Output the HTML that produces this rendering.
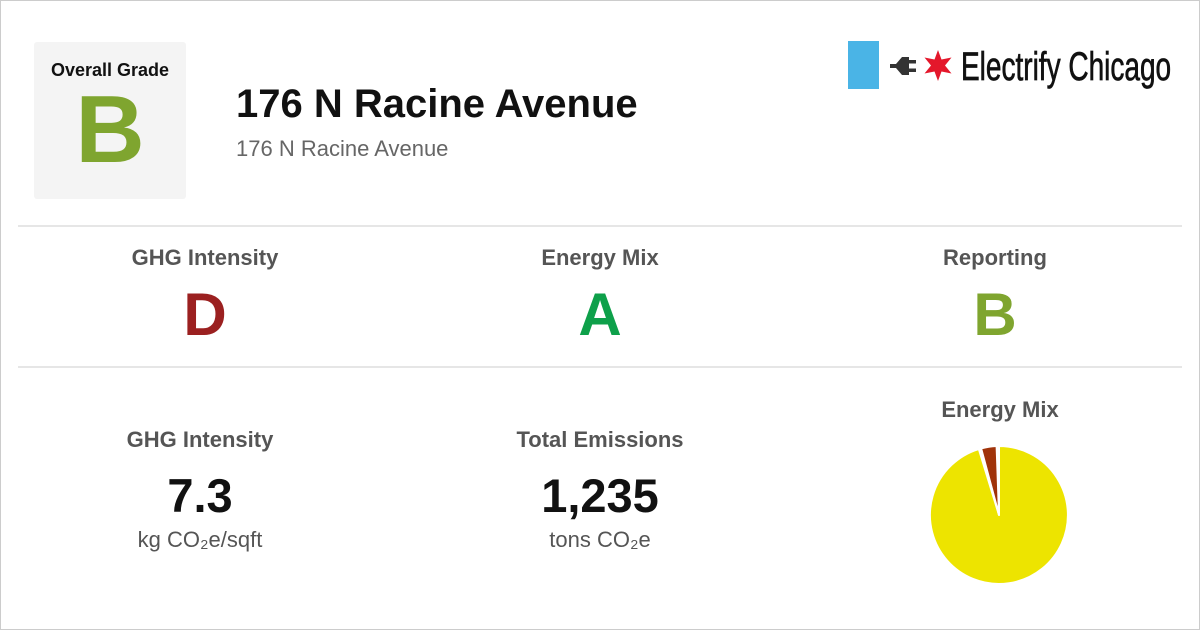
<!DOCTYPE html>
<html><head><style>
body{margin:0;width:1200px;height:630px;background:#fff;font-family:"Liberation Sans",sans-serif;overflow:hidden}
.frame{position:absolute;left:0;top:0;width:1198px;height:628px;border:1px solid #ccc}
.abs{position:absolute}
.c{text-align:center;position:absolute}
.lbl{font-weight:bold;color:#555;font-size:22px}
.hr{position:absolute;left:18px;width:1164px;height:2px;background:#e6e6e6}
</style></head><body>
<div class="frame"></div>
<div class="abs" style="left:34px;top:42px;width:152px;height:157px;background:#f4f4f4;border-radius:3px"></div>
<div class="c" style="left:34px;width:152px;top:60px;font-weight:bold;font-size:18px;color:#111">Overall Grade</div>
<div class="c" style="left:34px;width:152px;top:82px;font-weight:bold;font-size:96px;color:#7fa52f;line-height:1">B</div>
<div class="abs" style="left:236px;top:82px;font-weight:bold;font-size:40px;color:#111;white-space:nowrap">176 N Racine Avenue</div>
<div class="abs" style="left:236px;top:136px;font-size:22px;color:#666">176 N Racine Avenue</div>
<div class="abs" style="left:848px;top:41px;width:31px;height:48px;background:#4ab4e6"></div>
<svg class="abs" style="left:886px;top:48px" width="72" height="36" viewBox="0 0 72 36">
<path d="M4 16h6l6-7h7v18h-7l-6-7H4z" fill="#333"/><rect x="23" y="12" width="7" height="3.5" fill="#333"/><rect x="23" y="20.5" width="7" height="3.5" fill="#333"/>
<polygon fill="#e4172b" points="52,2 55.5,11.5 65.5,9.5 59,17.5 65.5,25.5 55.5,23.5 52,33 48.5,23.5 38.5,25.5 45,17.5 38.5,9.5 48.5,11.5"/>
</svg>
<div class="abs" style="left:961px;top:45px;font-size:40px;color:#111;-webkit-text-stroke:0.7px #111;transform:scaleX(0.7);transform-origin:left;white-space:nowrap">Electrify Chicago</div>
<div class="hr" style="top:225px"></div>
<div class="hr" style="top:366px"></div>
<div class="c lbl" style="left:105px;width:200px;top:245px">GHG Intensity</div>
<div class="c lbl" style="left:500px;width:200px;top:245px">Energy Mix</div>
<div class="c lbl" style="left:895px;width:200px;top:245px">Reporting</div>
<div class="c" style="left:105px;width:200px;top:285px;font-weight:bold;font-size:60px;color:#9b2020;line-height:1">D</div>
<div class="c" style="left:500px;width:200px;top:285px;font-weight:bold;font-size:60px;color:#0ea04a;line-height:1">A</div>
<div class="c" style="left:895px;width:200px;top:285px;font-weight:bold;font-size:60px;color:#7fa52f;line-height:1">B</div>
<div class="c lbl" style="left:80px;width:240px;top:427px">GHG Intensity</div>
<div class="c lbl" style="left:480px;width:240px;top:427px">Total Emissions</div>
<div class="c lbl" style="left:880px;width:240px;top:397px">Energy Mix</div>
<div class="c" style="left:80px;width:240px;top:472px;font-weight:bold;font-size:47px;color:#111;line-height:1">7.3</div>
<div class="c" style="left:480px;width:240px;top:472px;font-weight:bold;font-size:47px;color:#111;line-height:1">1,235</div>
<div class="c" style="left:80px;width:240px;top:527px;font-size:22px;color:#555">kg CO₂e/sqft</div>
<div class="c" style="left:480px;width:240px;top:527px;font-size:22px;color:#555">tons CO₂e</div>
<svg class="abs" style="left:0;top:0" width="1200" height="630">
<path d="M999 515L999 446A69 69 0 1 1 978.8 449Z" fill="#ede400" stroke="#fff" stroke-width="2" stroke-linejoin="round"/>
<path d="M999 515L981.1 448.4A69 69 0 0 1 996.6 446Z" fill="#a0330a" stroke="#fff" stroke-width="2" stroke-linejoin="round"/>
</svg>
</body></html>
